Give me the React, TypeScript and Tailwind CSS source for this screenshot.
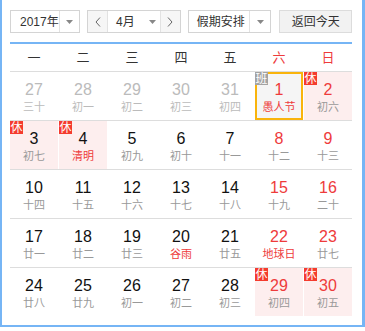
import React from "react";

type Cell = {
  d: number;
  l: string;
  prev?: boolean;
  red?: boolean;
  lred?: boolean;
  badge?: "休" | "班";
  pink?: boolean;
  today?: boolean;
};

const rows: Cell[][] = [
  [
    { d: 27, l: "三十", prev: true },
    { d: 28, l: "初一", prev: true },
    { d: 29, l: "初二", prev: true },
    { d: 30, l: "初三", prev: true },
    { d: 31, l: "初四", prev: true },
    { d: 1, l: "愚人节", red: true, lred: true, badge: "班", today: true },
    { d: 2, l: "初六", red: true, badge: "休", pink: true },
  ],
  [
    { d: 3, l: "初七", badge: "休", pink: true },
    { d: 4, l: "清明", lred: true, badge: "休", pink: true },
    { d: 5, l: "初九" },
    { d: 6, l: "初十" },
    { d: 7, l: "十一" },
    { d: 8, l: "十二", red: true },
    { d: 9, l: "十三", red: true },
  ],
  [
    { d: 10, l: "十四" },
    { d: 11, l: "十五" },
    { d: 12, l: "十六" },
    { d: 13, l: "十七" },
    { d: 14, l: "十八" },
    { d: 15, l: "十九", red: true },
    { d: 16, l: "二十", red: true },
  ],
  [
    { d: 17, l: "廿一" },
    { d: 18, l: "廿二" },
    { d: 19, l: "廿三" },
    { d: 20, l: "谷雨", lred: true },
    { d: 21, l: "廿五" },
    { d: 22, l: "地球日", red: true, lred: true },
    { d: 23, l: "廿七", red: true },
  ],
  [
    { d: 24, l: "廿八" },
    { d: 25, l: "廿九" },
    { d: 26, l: "初一" },
    { d: 27, l: "初二" },
    { d: 28, l: "初三" },
    { d: 29, l: "初四", red: true, badge: "休", pink: true },
    { d: 30, l: "初五", red: true, badge: "休", pink: true },
  ],
];

const Arrow = () => (
  <svg width="7" height="4" viewBox="0 0 7 4">
    <path d="M0 0 L7 0 L3.5 4 Z" fill="#888" />
  </svg>
);

const Chevron = ({ dir }: { dir: "l" | "r" }) => (
  <svg width="6" height="10" viewBox="0 0 6 10">
    <polyline
      points={dir === "l" ? "5,0.5 1,5 5,9.5" : "1,0.5 5,5 1,9.5"}
      fill="none"
      stroke="#666"
      strokeWidth="1"
    />
  </svg>
);

function DayCell({ c }: { c: Cell }) {
  const numColor = c.prev ? "text-[#bbbbbb]" : c.red ? "text-[#ee3b3b]" : "text-[#111111]";
  const lunColor = c.prev ? "text-[#bbbbbb]" : c.lred ? "text-[#ee3b3b]" : "text-[#999999]";
  const bg = c.today ? "bg-[#f5f5f5] border-2 border-[#f9b40c]" : c.pink ? "bg-[#fdeeee]" : "bg-white";
  return (
    <div className={`relative h-[48px] flex flex-col items-center ${bg} ${c.today ? "pt-[6px]" : "pt-[8px]"}`}>
      {c.badge && (
        <div
          className={`absolute ${c.today ? "-top-[2px] -left-[2px]" : "top-0 left-0"} w-[13px] h-[13px] flex items-center justify-center text-[12px] leading-none text-white ${
            c.badge === "休" ? "bg-[#f43b2e]" : "bg-[#a3a3a3]"
          }`}
        >
          {c.badge}
        </div>
      )}
      <div className={`text-[16px] leading-[20px] ${numColor}`}>{c.d}</div>
      <div className={`text-[11px] leading-[14px] whitespace-nowrap ${lunColor}`}>{c.l}</div>
    </div>
  );
}

export default function App() {
  const weekdays = ["一", "二", "三", "四", "五", "六", "日"];
  return (
    <div
      className="w-[365px] h-[331px] bg-white overflow-hidden"
      style={{ fontFamily: '"Liberation Sans", "Noto Sans CJK SC", sans-serif' }}
    >
      <div className="w-[365px] h-[327px] border-l-2 border-r-[3px] border-b-2 border-[#76b5f5] pl-[8px] pr-[10px] pt-[10px]">
        {/* header */}
        <div className="flex items-center h-[23px] text-[12px] text-[#333] whitespace-nowrap">
          <div className="flex h-[23px] w-[70px] border border-[#d4d4d4] bg-white">
            <div className="flex-1 flex items-center pl-[9px]">2017年</div>
            <div className="w-[21px] shrink-0 border-l border-[#e2e2e2] flex items-center justify-center">
              <Arrow />
            </div>
          </div>
          <div className="ml-[7px] flex h-[23px] w-[94px] border border-[#d4d4d4] bg-white">
            <div className="w-[20px] shrink-0 bg-[#f6f6f6] border-r border-[#e2e2e2] flex items-center justify-center">
              <Chevron dir="l" />
            </div>
            <div className="flex-1 flex items-center pl-[8px]">
              <span>4月</span>
              <span className="ml-[14px] flex">
                <Arrow />
              </span>
            </div>
            <div className="w-[20px] shrink-0 bg-[#f6f6f6] border-l border-[#e2e2e2] flex items-center justify-center">
              <Chevron dir="r" />
            </div>
          </div>
          <div className="ml-[7px] flex h-[23px] w-[84px] border border-[#d4d4d4] bg-white">
            <div className="flex-1 flex items-center pl-[8px]">假期安排</div>
            <div className="w-[21px] shrink-0 border-l border-[#e2e2e2] flex items-center justify-center">
              <Arrow />
            </div>
          </div>
          <div className="ml-[8px] flex h-[23px] w-[73px] border border-[#dcdcdc] bg-[#f2f2f2] items-center justify-center">
            返回今天
          </div>
        </div>
        <div className="mt-[9px] h-[2px] bg-[#76b5f5]" />
        {/* weekdays */}
        <div className="grid grid-cols-7 gap-x-[1px] h-[28px] border-b border-[#dddddd] items-center text-[13px]">
          {weekdays.map((w, i) => (
            <div key={w} className={`text-center ${i >= 5 ? "text-[#ee3b3b]" : "text-[#333]"}`}>
              {w}
            </div>
          ))}
        </div>
        {rows.map((r, ri) => (
          <div
            key={ri}
            className={`grid grid-cols-7 gap-x-[1px] ${ri < rows.length - 1 ? "border-b border-[#dddddd]" : ""}`}
          >
            {r.map((c, ci) => (
              <DayCell key={ci} c={c} />
            ))}
          </div>
        ))}
      </div>
    </div>
  );
}
